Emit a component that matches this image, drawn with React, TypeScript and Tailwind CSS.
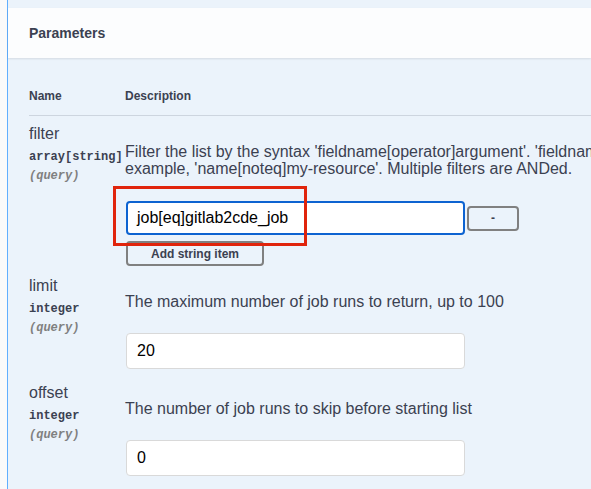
import React from "react";

const sans = { fontFamily: '"Liberation Sans", Arial, sans-serif' };

function ParamName({ name, type }: { name: string; type: string }) {
  return (
    <div className="w-[96px] shrink-0 flex flex-col">
      <div className="text-[16px] leading-[18px] text-[#3b4151]">{name}</div>
      <div className="mt-[7px] font-['Liberation_Mono',monospace] font-bold text-[12px] leading-[14px] text-[#3b4151] whitespace-nowrap">
        {type}
      </div>
      <div className="mt-[5px] font-['Liberation_Mono',monospace] italic font-bold text-[12px] leading-[14px] text-[#808080]">
        (query)
      </div>
    </div>
  );
}

export default function App() {
  return (
    <div
      className="w-[591px] h-[489px] overflow-hidden flex bg-[#fafafa] font-['Liberation_Sans',Arial,sans-serif]"
      style={sans}
    >
      <div className="w-[7px] shrink-0 bg-[#fafafa]" />
      <div className="w-[1px] shrink-0 bg-[#61affe]" />
      <div className="flex-1 flex flex-col bg-[#ebf3fb] min-w-0">
        <div className="h-[8px] shrink-0" />
        <div className="h-[50px] shrink-0 bg-[#fcfdfe] shadow-[0_1px_2px_rgba(0,0,0,0.1)] flex items-center pl-[21px]">
          <h4 className="text-[14px] font-bold text-[#3b4151]">Parameters</h4>
        </div>
        <div className="pl-[21px] flex flex-col">
          <div className="pt-[31px] pb-[11px] border-b border-[#cdd5df] flex text-[12px] leading-[15px] font-bold text-[#3b4151]">
            <div className="w-[96px] shrink-0">Name</div>
            <div>Description</div>
          </div>

          {/* filter */}
          <div className="flex mt-[9px]">
            <ParamName name="filter" type="array[string]" />
            <div className="flex flex-col pt-[18px] min-w-0">
              <div className="text-[16px] leading-[17px] text-[#3b4151] whitespace-nowrap">
                <div>Filter the list by the syntax 'fieldname[operator]argument'. 'fieldname' must be one of the fields. For</div>
                <div>example, 'name[noteq]my-resource'. Multiple filters are ANDed.</div>
              </div>
              <div className="mt-[24px] ml-[1px] flex items-center gap-[2px] relative">
                <div className="w-[339px] h-[34px] rounded-[4px] border-2 border-[#0d63d1] bg-white flex items-center px-[9px] text-[16px] text-black">
                  job[eq]gitlab2cde_job
                </div>
                <div className="w-[52px] h-[25px] rounded-[4px] border-2 border-[#808080] flex items-center justify-center text-[12px] font-bold text-[#3b4151]">
                  -
                </div>
                <div className="absolute left-[-13px] top-[-15px] w-[194px] h-[60px] border-[3px] border-[#e0240c] pointer-events-none" />
              </div>
              <div className="mt-[6px] ml-[1px] w-[138px] h-[25px] rounded-[4px] border-2 border-[#808080] flex items-center justify-center text-[12px] font-bold text-[#3b4151]">
                Add string item
              </div>
            </div>
          </div>

          {/* limit */}
          <div className="flex mt-[11px]">
            <ParamName name="limit" type="integer" />
            <div className="flex flex-col pt-[16px]">
              <div className="text-[16px] leading-[17px] text-[#3b4151] whitespace-nowrap">
                The maximum number of job runs to return, up to 100
              </div>
              <div className="mt-[23px] ml-[1px] w-[339px] h-[36px] rounded-[4px] border border-[#d9d9d9] bg-white flex items-center px-[10px] text-[16px] text-black">
                20
              </div>
            </div>
          </div>

          {/* offset */}
          <div className="flex mt-[15px]">
            <ParamName name="offset" type="integer" />
            <div className="flex flex-col pt-[16px]">
              <div className="text-[16px] leading-[17px] text-[#3b4151] whitespace-nowrap">
                The number of job runs to skip before starting list
              </div>
              <div className="mt-[23px] ml-[1px] w-[339px] h-[36px] rounded-[4px] border border-[#d9d9d9] bg-white flex items-center px-[10px] text-[16px] text-black">
                0
              </div>
            </div>
          </div>
        </div>
      </div>
    </div>
  );
}
